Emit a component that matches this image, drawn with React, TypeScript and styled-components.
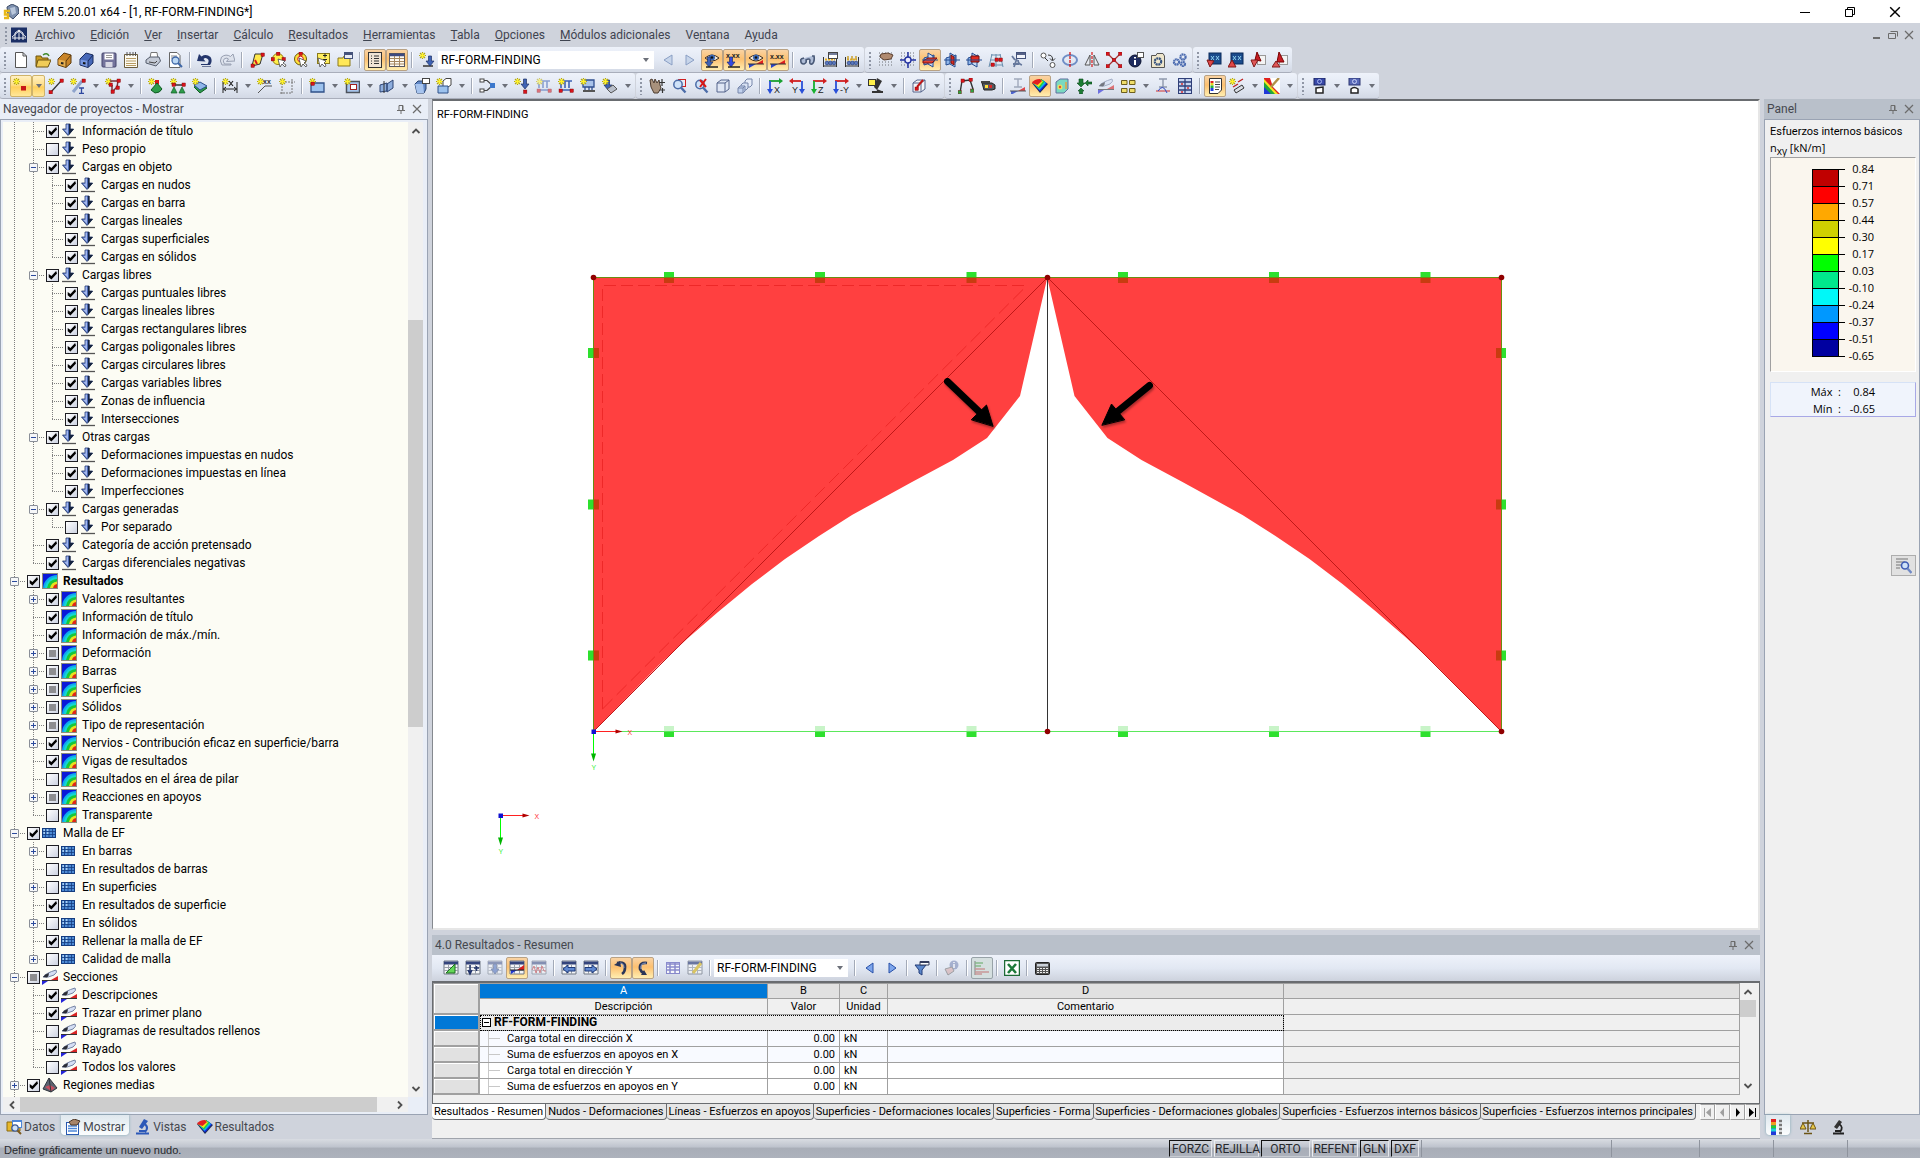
import React from 'react';
import styled, { createGlobalStyle, css } from 'styled-components';

const UI = 'Roboto, "Open Sans", sans-serif';
const SANS = '"Liberation Sans", Arial, sans-serif';

const GlobalStyle = createGlobalStyle`
  *, *::before, *::after { box-sizing: border-box; }
  body { margin: 0; background: #cfd3dc; }
  button, input, select { font: inherit; color: inherit; margin: 0; padding: 0; }
  button { background: none; border: 0; white-space: nowrap; }
  ul { list-style: none; margin: 0; padding: 0; }
  svg { display: block; flex: none; }
`;

/* ---------- icons ---------- */

const Star = ({ x = 0, y = 0 }: { x?: number; y?: number }) => (
  <g transform={`translate(${x} ${y})`}>
    <path d="M3.5 0V7M0 3.5H7M1 1L6 6M6 1L1 6" stroke="#b0a516" strokeWidth="1.2" />
    <path d="M3.5 1V6M1 3.5H6" stroke="#fff22e" strokeWidth="1.6" />
  </g>
);
const Node = ({ x, y, c = '#d8141c' }: { x: number; y: number; c?: string }) => (
  <rect x={x} y={y} width="3.4" height="3.4" fill={c} stroke="#700" strokeWidth=".4" />
);
const Grid = () => (
  <g>
    <path d="M1 1H15V14H1Z" fill="#f4f5f7" stroke="#6f7682" />
    <path d="M1 3H15" stroke="#34447c" strokeWidth="3" />
    <path d="M1 7.5H15M1 10.5H15M5.5 4V14M10.5 4V14" stroke="#9aa0aa" />
  </g>
);
const DotGrid = () => (
  <path d="M1 4H15M1 7H15M1 10H15M1 13H15M1 1H15" stroke="#6d7076" strokeDasharray="1 2" />
);
const Book = () => (
  <g>
    <path d="M1.500 5V15M14.500 5V15M2 14H14" stroke="#333" />
    <path d="M3 7.500H13" stroke="#e8b020" strokeWidth="2" strokeDasharray="2 1" />
    <circle cx="5" cy="11" r="1.900" fill="#5878c0" stroke="#24386c" strokeWidth=".6" />
    <circle cx="8.500" cy="11" r="1.900" fill="#5878c0" stroke="#24386c" strokeWidth=".6" />
    <circle cx="12" cy="11" r="1.900" fill="#5878c0" stroke="#24386c" strokeWidth=".6" />
  </g>
);
const Cube = ({ fill = '#dfe6f4' }: { fill?: string }) => (
  <path d="M2 5L6 2H14V11L10 14H2ZM2 5H10V14M10 5L14 2" fill={fill} stroke="#55658c" />
);
const Loupe = () => (
  <g>
    <circle cx="7" cy="6.5" r="4.2" fill="#cfe2f8" stroke="#4b6ca8" strokeWidth="1.5" />
    <path d="M10 9.5L14.5 14.5" stroke="#4b6ca8" strokeWidth="2.4" />
  </g>
);
const Screen = () => (
  <g>
    <rect x="3" y="1" width="12" height="11" fill="#1a4b8c" stroke="#0b2a5a" />
    <path d="M5 4L8 8M8 4L5 8M10 4L13 8M13 4L10 8" stroke="#8fd0f0" />
  </g>
);
const AxisPair = ({ a, b, t, up }: { a: string; b: string; t: string; up?: boolean }) => (
  <g>
    <path d="M2 3H12" stroke={a} strokeWidth="1.800" />
    <path d={up ? 'M4 0L0 3L4 6Z' : 'M12 0L16 3L12 6Z'} fill={a} />
    <path d={up ? 'M13 3V12' : 'M3 3V12'} stroke={b} strokeWidth="1.800" />
    <path d={up ? 'M10 11L13 16L16 11Z' : 'M0 11L3 16L6 11Z'} fill={b} />
    <text x={up ? 3 : 7} y="15" fontSize="9" fontFamily={SANS} fill="#222">{t}</text>
  </g>
);
const Eye = () => (
  <g>
    <path d="M1 6Q8 0 15 6Q8 12 1 6Z" fill="#f2e4d2" stroke="#3c2b1c" />
    <circle cx="8" cy="5.5" r="3" fill="#3d68b4" /><circle cx="8" cy="5.5" r="1.2" fill="#111" />
  </g>
);
const Wedge = ({ y = 11 }: { y?: number }) => (
  <g>
    <path d={`M1 ${y}H8L1 ${y + 4}Z`} fill="#2a45c8" /><path d={`M15 ${y}H8L15 ${y - 4}Z`} fill="#e02020" />
    <path d={`M0 ${y}H16`} stroke="#333" />
  </g>
);
const DownArrow = ({ x = 8, y = 2, c = '#3e62b4' }: { x?: number; y?: number; c?: string }) => (
  <path d={`M${x - 1.5} ${y}H${x + 1.5}V${y + 5}H${x + 4}L${x} ${y + 10}L${x - 4} ${y + 5}H${x - 1.5}Z`} fill={c} stroke="#1d3166" strokeWidth=".7" />
);
const Pyramid = ({ y = 8, x = 0 }: { y?: number; x?: number }) => (
  <path d={`M${x + 4} ${y}L${x + 7} ${y + 6}H${x + 1}Z`} fill="#2e9d4a" stroke="#0e5a22" strokeWidth=".7" />
);
const IBeam = ({ c = '#8f99ad' }: { c?: string }) => <path d="M4 1H12M8 1V9M4 9H12" stroke={c} strokeWidth="1.4" fill="none" />;
const Crossed = ({ mark }: { mark: string }) => (
  <g>
    <path d="M2 6L12 3V10L2 13Z" fill="#8fb6ea" stroke="#234a90" />
    <path d="M6 1L11 4V15L6 12Z" fill="#c3daf5" stroke="#234a90" />
    {mark === 'xy' && <path d="M1 9L6 6H15L10 11H1Z" fill="#e04030" stroke="#801010" />}
    {mark === 'yz' && <path d="M7 3L10 5V13L7 11Z" fill="#e02a20" stroke="#701010" />}
    {mark === 'xz' && <path d="M5 4H13V10H5Z" fill="#e02a20" stroke="#701010" />}
    <path d="M0 8H16" stroke="#234a90" />
  </g>
);
const Contour = () => (
  <g>
    <rect x=".5" y=".5" width="15" height="15" fill="#0a18d8" stroke="#8c8c7c" />
    <path d="M1 15A14 14 0 0 1 15 2V15Z" fill="#10a8ee" />
    <path d="M3 15A12 12 0 0 1 15 4V15Z" fill="#14d8d0" />
    <path d="M5 15A10 10 0 0 1 15 6V15Z" fill="#18c83a" />
    <path d="M8 15A8 8 0 0 1 15 8.500V15Z" fill="#e8e020" />
    <path d="M11 15A5 5 0 0 1 15 11V15Z" fill="#e02818" />
  </g>
);
const Rainbow = () => (
  <g>
    <path d="M0 5L8 15L16 6L9 1Z" fill="#1c2c50" />
    <path d="M1 5L8 13.500L15 5.500L12 3Z" fill="#1428e8" />
    <path d="M1 5L7.500 12L14 5L11 2Z" fill="#10b8e8" />
    <path d="M1 5L7 10.500L12.500 4L9 1Z" fill="#28d038" />
    <path d="M1 5L6.500 9L11 3.500L8 1Z" fill="#f4e420" />
    <path d="M0 5Q2 1 8 1L10 3L5.500 7Z" fill="#e42020" />
  </g>
);
const Section = () => (
  <g>
    <path d="M1 8Q4 4 14 1Q16 3 12 6Q6 9 1 8Z" fill="#d5dff4" stroke="#7684a4" />
    <path d="M1 8Q3 5 7 4Q7 7 5 8.500Z" fill="#2a2c34" />
    <path d="M0 11.500H16" stroke="#333" /><path d="M0 12H6L0 16Z" fill="#2424d8" /><path d="M16 11H9L16 7Z" fill="#d82424" />
  </g>
);
const Scope = () => (
  <g>
    <path d="M9 1L12 3L7 10L4 8Z" fill="#333" /><path d="M9 5Q14 8 10 13M3 14.500H14M5 12H11" stroke="#222" strokeWidth="1.8" fill="none" />
  </g>
);

const ICONS: Record<string, React.ReactNode> = {
  app: <g><path d="M4 3L9 0L15 3L16 9L10 15L5 11Z" fill="#7c8fae" stroke="#3d4c68" /><path d="M7 4L12 3L13 9L9 11Z" fill="#b9c7dc" /><path d="M7 7H2V10.500H5V14H1" stroke="#e8b818" strokeWidth="2.400" fill="none" /></g>,
  model: <g><rect width="16" height="15" y=".5" fill="#1b2f66" /><path d="M1 11H15M4 13V6L8 3L12 6V13M1 10L8 4L15 10M8 3V13" stroke="#fff" fill="none" strokeWidth=".9" /></g>,
  new: <path d="M2.500.5H10L13.500 4V15.500H2.500ZM10 .5V4H13.500" fill="#fff" stroke="#555" />,
  open: <g><path d="M1 4H6L7 6H13V14H1Z" fill="#c89a20" stroke="#6e5512" /><path d="M3 8H16L13 15H1Z" fill="#f0cc58" stroke="#6e5512" /><path d="M8 3Q12 0 14 4" stroke="#3f8a2c" strokeWidth="1.500" fill="none" /></g>,
  box: <g><path d="M1 7L7 1L14 3V11L9 15.500L1 13Z" fill="#c88428" stroke="#5c3a0c" /><path d="M1.500 7.500L9 9V15L1.500 12.500Z" fill="#e8b050" /><path d="M9 9L14 3M9 9V15" stroke="#5c3a0c" /><path d="M4 11L6.500 11.500" stroke="#222" strokeWidth="1.800" /></g>,
  boxb: <g><path d="M1 7L7 1L14 3V11L9 15.500L1 13Z" fill="#4668b8" stroke="#182a5c" /><path d="M1.500 7.500L9 9V15L1.500 12.500Z" fill="#7898e0" /><path d="M9 9L14 3M9 9V15" stroke="#182a5c" /><path d="M4 11L6.500 11.500" stroke="#111" strokeWidth="1.800" /></g>,
  save: <g><rect x="1" y="1" width="14" height="14" rx="1" fill="#74749c" stroke="#45456c" /><rect x="3.500" y="1.500" width="9" height="6" fill="#fff" /><rect x="4.500" y="10" width="7" height="5" fill="#d8d8e4" /><path d="M5 3.500H11M5 5.500H11" stroke="#999" /></g>,
  report: <g><path d="M1.500 2.500H14.500V15.500H1.500Z" fill="#fdfbf2" stroke="#6b5c3c" /><path d="M4 0V4M7 0V4M10 0V4M12.500 0V4" stroke="#555" /><path d="M3 6.500H13M3 9H13M3 11.500H13M3 13.500H13" stroke="#b79b62" /></g>,
  print: <g><path d="M5 6L6 .5H12L13 7" fill="#fff" stroke="#777" /><path d="M1 8L5 5H14L15.500 9L11 14L1 11Z" fill="#c4cad6" stroke="#555d6c" /><path d="M4 10L10 11L12 9" stroke="#444" fill="none" /></g>,
  preview: <g><path d="M2.500.5H10L13 3.500V15.500H2.500Z" fill="#fff" stroke="#666" /><path d="M4 4H10M4 6H8" stroke="#888" /><circle cx="8.500" cy="8.500" r="3.500" fill="#bcd8f4" stroke="#3f68a8" strokeWidth="1.300" /><path d="M11 11L15 15" stroke="#3f68a8" strokeWidth="2" /></g>,
  undo: <g><path d="M0 9L2 2L4.500 4.500Q9 1.500 13.500 5Q16 9 13 13H4V12H10.500Q13 8 10 6.500Q8 5.500 6.500 7L8.500 9.500Z" fill="#24366c" /><path d="M5 14.500H14" stroke="#6a7698" /></g>,
  redo: <path d="M16 9L14 2L11.500 4.500Q7 1.500 2.500 5Q0 9 3 13H12V12H5.500Q3 8 6 6.500Q8 5.500 9.500 7L7.500 9.500Z" fill="#dde2ec" stroke="#98a0b2" />,
  selpoly: <g><path d="M3 14L6 2H14L11 12Z" fill="#ffe94a" stroke="#333" /><path d="M6 8L8 12" stroke="#d81818" strokeWidth="2" /><Node x={2} y={12} /><Node x={12} y={1} /></g>,
  selcirc: <g><circle cx="7" cy="7" r="5.500" fill="#fff04a" stroke="#967d12" /><Node x={5.500} y={0} /><Node x={0} y={5.500} /><Node x={11} y={5.500} /><path d="M7 7L9 15L11 12L14 15L15 13L12 11L14 9Z" fill="#fff" stroke="#444" strokeWidth=".8" /></g>,
  selring: <g><circle cx="7.500" cy="7" r="6" fill="#ffe23a" stroke="#6c5a08" /><circle cx="7.500" cy="7" r="2.800" fill="#fff" stroke="#d81818" /><Node x={6} y={0} /><path d="M6 6L8 15L10 12L13 15L14 13L11 11L13 9Z" fill="#fff" stroke="#444" strokeWidth=".8" /></g>,
  selwin: <g><rect x="2.500" y="1.500" width="12" height="10" fill="#ffee60" stroke="#8a7a1c" /><path d="M8 3.500H12M10 1.500V5.500M8 7.500H12" stroke="#222" /><path d="M3 6L5 15L7 12L10 15L11 13L9 11L11 9Z" fill="#fff" stroke="#444" strokeWidth=".8" /></g>,
  selfold: <g><path d="M1 6H6L7 4H13V14H1Z" fill="#ffe858" stroke="#8c7a18" /><rect x="7.500" y=".5" width="8" height="6" fill="#e8ecf6" stroke="#44527a" /><path d="M8 2H15" stroke="#44527a" strokeWidth="2" /></g>,
  list: <g><rect x="1.500" y=".5" width="13" height="15" fill="#f0e4d4" stroke="#333" /><path d="M4 4H5M4 6.500H5M4 9H5M4 11.500H5M7 4H12M7 6.500H12M7 9H12M7 11.500H12" stroke="#333" strokeWidth="1.200" /></g>,
  table: <g><rect x=".5" y="1.500" width="15" height="13" fill="#fffaf0" stroke="#565660" /><path d="M1 3H15" stroke="#3e4a80" strokeWidth="2.500" /><path d="M1 6.500H15M1 9.500H15M1 12H15M5.500 4V14M10.500 4V14" stroke="#a48660" /></g>,
  newload: <g><Star /><path d="M4 14H14" stroke="#333" strokeWidth="1.500" /><DownArrow x={11} y={4} /></g>,
  prev: <path d="M12 3V13L4 8Z" fill="#c7d5ea" stroke="#8a9fc4" />,
  next: <path d="M4 3V13L12 8Z" fill="#c7d5ea" stroke="#8a9fc4" />,
  eyeload: <g><Eye /><DownArrow x={5} y={5} /><path d="M2 15H14" stroke="#222" strokeWidth="1.500" /></g>,
  valload: <g><text x="0" y="6" fontSize="7" fontWeight="700" fontFamily={SANS} fill="#222">x.xx</text><DownArrow x={5} y={5} c="#3448e0" /><path d="M2 15H14" stroke="#222" strokeWidth="1.500" /></g>,
  eyeres: <g><Eye /><Wedge y={12} /></g>,
  valres: <g><text x="0" y="7" fontSize="7" fontWeight="700" fontFamily={SANS} fill="#222">x.xx</text><Wedge y={12} /></g>,
  glasses: <path d="M1 7Q0 12 4 12Q7 11 6 8Q9 6 10 8Q9 13 12 12Q15 10 14 4L12 4M1 7L4 6" stroke="#4a5a78" strokeWidth="1.600" fill="#aebcd6" />,
  calcbook: <g><Book /><rect x="6.500" y=".5" width="9" height="6" fill="#fff" stroke="#444" /><path d="M7 2H15" stroke="#44527a" strokeWidth="1.500" /></g>,
  calcall: <g><Book /><path d="M4 4V8M8 4V8M12 4V8" stroke="#c8a030" strokeWidth="1.500" /></g>,
  handgrid: <g><DotGrid /><path d="M3 2L10 1L15 3L13 7L6 8L2 5Z" fill="#b08a70" stroke="#5c4030" /></g>,
  snap: <g><DotGrid /><circle cx="8" cy="8" r="3" fill="#eef" stroke="#2030a0" strokeWidth="1.300" /><path d="M8 0V5M8 11V16M0 8H5M11 8H16" stroke="#2030a0" strokeWidth="1.500" /></g>,
  planexy: <Crossed mark="xy" />, planeyz: <Crossed mark="yz" />, planexz: <Crossed mark="xz" />,
  lattice: <g><path d="M4 2L1 15M8 2V15M12 2L15 15M3 3H13M2 8H14M1 13H15" stroke="#6a8fae" fill="none" /><Node x={7} y={6} /><Node x={3} y={11} /><Node x={11} y={6} /></g>,
  tools: <g><path d="M4 15L7 6M3 12H9M12 13Q8 12 8 8M2 4L5 8" stroke="#66789c" strokeWidth="1.800" /><rect x="6.500" y=".5" width="9" height="6" fill="#f2f4fa" stroke="#44527a" /><path d="M7 2H15" stroke="#44527a" strokeWidth="1.800" /></g>,
  copy: <g><circle cx="3.500" cy="3.500" r="2.500" fill="#fff" stroke="#555" /><circle cx="12.500" cy="13" r="2.500" fill="#fff" stroke="#555" /><path d="M8 3Q13 3 12.500 8M10 6.500L12.500 9L15 6.500M5 6L8 9" stroke="#333" fill="none" /></g>,
  rotate: <g><ellipse cx="8" cy="8" rx="7" ry="5" fill="none" stroke="#6f8ec6" strokeWidth="2" /><path d="M8 0V16" stroke="#d81818" strokeWidth="1.300" strokeDasharray="3 1" /></g>,
  mirror: <g><path d="M6 3V13H1ZM10 3V13H15Z" fill="#e8ebf2" stroke="#555" /><path d="M8 0V16" stroke="#d81818" strokeWidth="1.200" strokeDasharray="3 1" /></g>,
  explode: <g><path d="M2 2L14 14M14 2L2 14" stroke="#a33" strokeWidth="1.300" /><Node x={0} y={0} /><Node x={12.500} y={0} /><Node x={0} y={12.500} /><Node x={12.500} y={12.500} /><Node x={6.300} y={6.300} /></g>,
  info: <g><circle cx="7" cy="9" r="6" fill="#1c2a5e" stroke="#0b1230" /><path d="M7 8V13M7 5V6.500" stroke="#fff" strokeWidth="2" /><rect x="9.500" y=".5" width="6" height="5" fill="#fff" stroke="#555" /></g>,
  gearwin: <g><path d="M1.500 3.500H6L7 1.500H13L14.500 4V15.500H1.500Z" fill="#eee6cc" stroke="#555" /><circle cx="8" cy="9.500" r="3.200" fill="none" stroke="#33507e" strokeWidth="2.200" strokeDasharray="2 .6" /></g>,
  gears: <g fill="none" stroke="#4c6cb0" strokeWidth="2.200" strokeDasharray="1.700 .4"><circle cx="4.500" cy="10" r="2.600" /><circle cx="11" cy="5" r="2.600" /><circle cx="11" cy="12" r="2" /></g>,
  scrdown: <g><Screen /><path d="M1 8L8 9L4 15Z" fill="#e04848" stroke="#801818" /></g>,
  scrup: <g><Screen /><path d="M4 8L8 15H0Z" fill="#e04848" stroke="#801818" /></g>,
  acdown: <g><rect x="7.500" y="3.500" width="8" height="9" fill="#f4f4f4" stroke="#999" /><path d="M7 0L11 9L5 8Z" fill="#c81c24" stroke="#700" /><path d="M1 8H8L4 15Z" fill="#e05858" stroke="#801818" /></g>,
  acup: <g><rect x="7.500" y="3.500" width="8" height="9" fill="#f4f4f4" stroke="#999" /><path d="M7 0L12 10H5Z" fill="#c81c24" stroke="#700" /><path d="M4 9L8 15H0Z" fill="#e05858" stroke="#801818" /></g>,

  nnode: <g><Star /><rect x="8" y="8" width="5" height="4.500" fill="#c81818" /></g>,
  nline: <g><path d="M3 14L13 3" stroke="#333" strokeWidth="1.200" /><Node x={12} y={1} /><Node x={1} y={12.500} /><Star /></g>,
  nbeam: <g><path d="M3 14L12 3" stroke="#8fa4cc" strokeWidth="3" /><Node x={12} y={1} /><Star /><path d="M9 10H14M11.500 10V15M9 15.500H14" stroke="#2f49a0" strokeWidth="1.300" /></g>,
  npoly: <g><Star /><path d="M5 3H13L12 9L7 14V7" stroke="#7c3038" strokeWidth="1.500" fill="none" /><Node x={4} y={5} /><Node x={12} y={1} /><Node x={11} y={8} /><Node x={6} y={12} /></g>,
  nsup: <g><Star /><rect x="7" y="2" width="4" height="4" fill="#d81818" /><path d="M9 5L14 11Q12 15 7 15L3 12Z" fill="#2e9d4a" stroke="#0e5a22" /></g>,
  nlsup: <g><Star /><path d="M3 7H14" stroke="#333" strokeWidth="1.500" /><Node x={2} y={5} /><Node x={12} y={5} /><Pyramid x={0} y={9} /><Pyramid x={8} y={9} /></g>,
  nssup: <g><path d="M2 9L8 6L15 10L8 15Z" fill="#2e9d4a" stroke="#0e5a22" /><path d="M2 7L8 4L15 8L8 12Z" fill="#8fb6ea" stroke="#2b4f8c" /><Star /></g>,
  ndim: <g><Star /><path d="M1 4V15M15 4V15M1 11H15M4 9L1.500 11L4 13M12 9L14.500 11L12 13" stroke="#222" fill="none" /><path d="M7 3L11 8M11 3L7 8" stroke="#222" strokeWidth="1.200" /></g>,
  nxx: <g><Star /><path d="M1 15L8 8H15" stroke="#555" fill="none" /><text x="6" y="6" fontSize="7" fontWeight="700" fontFamily={SANS} fill="#333">xx</text></g>,
  nguide: <g><path d="M3 16V4H16M13 1V15H1" stroke="#777" strokeDasharray="2 1" fill="none" /><Star /></g>,
  nsurf: <g><path d="M2 5H15V14H2Z" fill="#9cc2ee" stroke="#2f5088" strokeWidth="1.300" /><Star /><Node x={2} y={4} /></g>,
  nopen: <g><rect x="2.500" y="3.500" width="13" height="11" fill="#a8c6ec" stroke="#4e535c" strokeWidth="1.500" /><rect x="6.500" y="6.500" width="6" height="5" fill="#fff" stroke="#a02020" /><Star /></g>,
  ncut: <g><path d="M1 7L8 5V13L1 14ZM8 6L14 2V10L8 14Z" fill="#8eaede" stroke="#2d4474" /><path d="M5 3V15" stroke="#333" /></g>,
  nsolid: <g><path d="M1 6L4 3H12V11L10 15H3Z" fill="#6188c8" stroke="#24406e" /><path d="M1 6H9L10 15H3Z" fill="#a7c4ee" /><rect x="8.500" y=".5" width="7" height="5" fill="#fff" stroke="#444" /></g>,
  nsolids: <g><path d="M7 3L10 .5H15V7L12 9H7Z" fill="#fff" stroke="#444" /><path d="M2 8H12V15H2Z" fill="#9cc2ee" stroke="#2f5088" /><Star /></g>,
  hinge: <g><path d="M2 2.500H8L13 7M2 12.500H8L13 8" stroke="#444" fill="none" strokeWidth="1.200" /><rect x="1" y="1" width="4" height="3" fill="#fff" stroke="#444" /><rect x="1" y="11" width="4" height="3" fill="#fff" stroke="#444" /><rect x="11" y="5" width="5" height="5" fill="#3c78cc" /></g>,
  nnload: <g><Star /><DownArrow x={11} y={1} /><Node x={9.500} y={12} /></g>,
  mload1: <g opacity=".55"><path d="M2 3H14M3 3V10M7 3V10M11 3V10M1 12H15" stroke="#3e62b4" strokeWidth="1.600" /><Star /><Node x={1} y={11} /><Node x={12} y={11} /></g>,
  mload2: <g><path d="M2 3H14M3 3V10M7 3V10M11 3V10M1 12H15" stroke="#3e62b4" strokeWidth="1.600" /><Star /><Node x={1} y={11} /><Node x={12} y={11} /></g>,
  sload: <g><path d="M3 2H14V9H3ZM5 9V14M9 9V14M12 9V14" fill="#a9c3ea" stroke="#2f4f90" strokeWidth="1.300" /><path d="M3 13H15" stroke="#555" strokeWidth="2" /><Star /></g>,
  fload: <g><DownArrow x={6} y={2} /><path d="M5 11L11 7L15 11L9 15Z" fill="#b9bfca" stroke="#555" /><Star /></g>,

  hand: <g><path d="M1 2L3 1L5 5L6 1L8 5L10 2L11 7L12 10L9 15H5L2 9Z" fill="#a8917c" stroke="#4c3c30" /><path d="M13 1V8M10 4.500H16M11 12H16M13.500 10V15" stroke="#333" strokeWidth="1.200" /></g>,
  zoomwin: <g><rect x="7.500" y="1.500" width="7" height="7" fill="none" stroke="#d02020" /><Loupe /></g>,
  zoomx: <g><Loupe /><path d="M7 2L13 9M13 1L7 9" stroke="#d81818" strokeWidth="2" /></g>,
  cube: <Cube />,
  cubes: <g><path d="M8 3L10 1H15V7L13 9H8Z" fill="#e6ecf8" stroke="#7686aa" /><path d="M4 7L6 5H11V10L9 12H4Z" fill="#d8e2f4" stroke="#7686aa" /><path d="M1 10L3 8H8V13L6 15H1ZM1 10H6V15M6 10L8 8" fill="#c2d2ee" stroke="#7686aa" /></g>,
  axx: <AxisPair a="#18a030" b="#2a50d8" t="X" />, axy: <AxisPair a="#d02020" b="#2a50d8" t="Y" up />,
  axz: <AxisPair a="#d02020" b="#18b030" t="Z" />, axmy: <AxisPair a="#d02020" b="#2a50d8" t="-Y" />,
  viewpt: <g><path d="M9 0L14 3L9 12L6 9Z" fill="#333" /><path d="M4 14H15M9 12L14 14" stroke="#333" strokeWidth="1.800" /><rect x=".5" y="1.500" width="7" height="6" fill="#fff04a" stroke="#333" /></g>,
  clip: <g><Cube fill="#f4f5f8" /><path d="M12 2L6 9" stroke="#c01818" strokeWidth="2" /><Node x={4} y={9} /></g>,
  frame: <g><path d="M2 15L4 3L12 2L15 11" stroke="#333" fill="none" strokeWidth="1.400" /><Node x={3} y={1} /><Node x={11} y={0} /><Node x={0} y={12.500} c="#30a040" /><Node x={12.500} y={11} c="#30a040" /></g>,
  camera: <g><path d="M2 5H12L15 7V11L12 12H4Z" fill="#555a60" stroke="#222" /><path d="M1 4H10" stroke="#444" strokeWidth="2" /><rect x="5" y="7" width="3" height="3" fill="#ffe03a" /><rect x="9" y="7" width="3" height="3" fill="#d82828" /></g>,
  ires: <g opacity=".8"><IBeam /><Wedge y={13} /></g>,
  rainbow: <Rainbow />,
  solres: <g><path d="M2 4L6 1H14V11L10 15H2Z" fill="#7ad8c0" stroke="#6070a0" /><circle cx="6" cy="9" r="2.500" fill="#f0e060" /><circle cx="6" cy="9" r="1.200" fill="#e05030" /><path d="M12 4V11" stroke="#e8a040" strokeWidth="1.500" /></g>,
  react: <g fill="#1c7c34" stroke="#0c4a1c" strokeWidth=".6"><path d="M3 1H7V5H9L5 9L1 5H3Z" /><path d="M9 5L12 2V4H16V6H12V8Z" /><path d="M5 10L8 13H6.500V16H3.500V13H2Z" /></g>,
  secres: <g opacity=".6"><Section /></g>,
  blocks: <path d="M1.500 2.500H7V6.500H1.500ZM9.500 2.500H15V6.500H9.500ZM1.500 10.500H7V14.500H1.500ZM9.500 10.500H15V14.500H9.500Z" fill="#efdd6a" stroke="#6c5e1c" />,
  isec: <g><IBeam /><path d="M1 13H15" stroke="#d03030" /><path d="M3 13Q8 5 12 15" stroke="#3048c0" fill="none" /></g>,
  resgrid: <g><rect x="1.500" y=".5" width="13" height="15" fill="#c8d4f0" stroke="#2f3f78" /><path d="M2 4H14M2 8H14M2 12H14M8 1V15" stroke="#2f3f78" strokeWidth="1.300" /><path d="M4 6H6M10 10H12M4 14H6" stroke="#d83030" strokeWidth="1.300" /></g>,
  legend: <g><path d="M2.500.5H14.500V12L11 15.500H2.500Z" fill="#fff" stroke="#333" /><path d="M5 3V5" stroke="#e02020" strokeWidth="3" /><path d="M5 5V7.500" stroke="#e8d020" strokeWidth="3" /><path d="M5 7.500V10" stroke="#20b040" strokeWidth="3" /><path d="M5 10V13" stroke="#2040e0" strokeWidth="3" /><path d="M8 4H13M8 6.500H13M8 9H13M8 11.500H12" stroke="#444" /></g>,
  wand: <g><Star /><path d="M5 12L13 7L15 10L7 15Z" fill="#d8dce4" stroke="#333" /><path d="M9 4L14 1M4 9L9 6" stroke="#c02020" strokeWidth="1.400" /></g>,
  palette: <g><rect width="16" height="16" fill="#20a838" /><path d="M0 4L11 16H16V0H0Z" fill="#f4e420" /><path d="M0 0H16V16H14L0 1Z" fill="#e02020" /><path d="M0 9V16H7Z" fill="#2038d8" /><path d="M6 0H16V16L9 9Z" fill="#fff" /><path d="M7 9L15 0" stroke="#b09048" strokeWidth="2.400" /></g>,
  disp1: <g><rect x="3" y="0" width="11" height="7" fill="#3848a8" stroke="#1c2660" /><circle cx="8.500" cy="3.500" r="2" fill="none" stroke="#a8b4f0" /><path d="M5 10L12 9V15H5Z" fill="#fff" stroke="#222" strokeWidth="1.500" /></g>,
  disp2: <g><rect x="3" y="0" width="11" height="7" fill="#5868b8" stroke="#2c3670" /><circle cx="8.500" cy="3.500" r="2" fill="none" stroke="#c8d0f4" /><path d="M5 11Q8 8 12 11V15H5Z" fill="#fff" stroke="#222" strokeWidth="1.500" /></g>,

  t1: <g><Grid /><path d="M3 13L12 4V13Z" fill="#64d858" stroke="#1c6c20" /></g>,
  t2: <g><Grid /><path d="M5 5V13M3 10L5 14L7 10M9 8H14M11.500 6V11" stroke="#22346c" strokeWidth="1.500" /></g>,
  t3: <g opacity=".5"><Grid /><DownArrow x={8} y={4} /></g>,
  t4: <g><Grid /><path d="M8 10L15 5V10Z" fill="#d82020" /><path d="M2 10H8L2 14Z" fill="#2038d0" /><path d="M1 10H15" stroke="#222" /></g>,
  t5: <g opacity=".55"><Grid /><path d="M1 10L3 6L5 13L7 7L9 13L11 6L13 11H15" stroke="#c83838" fill="none" /></g>,
  tl: <g><Grid /><path d="M2 9L7 5V7.500H14V11H7V13Z" fill="#6088d0" stroke="#1c3878" /></g>,
  tr: <g><Grid /><path d="M14 9L9 5V7.500H2V11H9V13Z" fill="#6088d0" stroke="#1c3878" /></g>,
  sync1: <g><path d="M4 3Q13 1 12 8Q12 12 9 14" stroke="#2a3658" strokeWidth="2.600" fill="none" /><path d="M5 3Q11 2 11 8" stroke="#8fa0c8" fill="none" /><path d="M1 5L7 1L8 7Z" fill="#2a3658" /></g>,
  sync2: <g><path d="M12 3Q4 2 5 9Q6 12 9 13" stroke="#2a3658" strokeWidth="2.600" fill="none" /><path d="M11 3Q5 3 6 9" stroke="#8fa0c8" fill="none" /><path d="M12 15L6 15L9 10Z" fill="#2a3658" /></g>,
  tgrid: <g opacity=".75"><rect x="1.500" y="2.500" width="13" height="11" fill="#fff" stroke="#6c6cc0" /><path d="M1 4H15M1 7H15M1 10H15M5 3V14M10 3V14" stroke="#6c6cc0" strokeWidth="1.500" /></g>,
  tedit: <g opacity=".7"><Grid /><path d="M6 13L14 3" stroke="#d8b828" strokeWidth="3" /></g>,
  left: <path d="M11 3V13L4 8Z" fill="#7ea6ec" stroke="#2850a8" />,
  right: <path d="M5 3V13L12 8Z" fill="#7ea6ec" stroke="#2850a8" />,
  filter: <g><path d="M1 5H12L8 10V15L5 13V10Z" fill="#5c88cc" stroke="#223c78" /><path d="M6 1.500H15V5H6Z" fill="#fff" stroke="#333c5c" /><path d="M6 2H15" stroke="#333c5c" strokeWidth="2" /></g>,
  pinfo: <g opacity=".55"><circle cx="10" cy="5" r="4.500" fill="#7080b0" /><path d="M10 4V8M10 2V3" stroke="#fff" strokeWidth="1.500" /><path d="M1 9L8 7L10 11L4 15Z" fill="#d8a8a8" stroke="#666" /></g>,
  bars: <g opacity=".6"><path d="M1 1V15" stroke="#444" /><path d="M1 3H9M1 6H7" stroke="#52a052" strokeWidth="1.500" /><path d="M1 9H11M1 12H15M1 14H8" stroke="#c06868" strokeWidth="1.300" /></g>,
  excel: <g><rect x=".5" y=".5" width="15" height="15" fill="#fff" stroke="#1d6b35" strokeWidth="1.500" /><path d="M4 4L12 13M12 4L4 13" stroke="#1d7a3a" strokeWidth="2.600" /></g>,
  calc: <g><rect x="1.500" y="2.500" width="14" height="12" rx="1" fill="#555" stroke="#222" /><rect x="3" y="4" width="11" height="2.500" fill="#ccd2da" /><path d="M3 8.500H14M3 10.500H14M3 12.500H14" stroke="#eee" strokeDasharray="2 1" /></g>,

  load: <g><path d="M1 14.500H15" stroke="#555" strokeWidth="1.300" /><path d="M5 1H9V6H12.500L7 12.500L1.500 6H5Z" fill="#4a68b4" stroke="#23386e" strokeWidth=".8" /><path d="M5.500 1.500H7V11L3 6.800H5.500Z" fill="#a3b8ee" /><path d="M8 1H9.500V6H13L8 12Z" fill="#15233f" /></g>,
  contour: <Contour />,
  mesh: <g><rect x=".5" y="3.500" width="13" height="9" fill="#4c8ad4" stroke="#143c80" /><path d="M0 6.500H14M0 9.500H14M3.500 3V13M7 3V13M10.500 3V13" stroke="#143c80" strokeWidth=".8" /><path d="M1.500 5H3M5 5H6.500M1.500 8H3M5 8H6.500" stroke="#c4e4fa" strokeWidth="1.500" /></g>,
  section: <Section />,
  pyramid: <g><path d="M7 1L15 11L9 15L1 12Z" fill="#5c6470" stroke="#2f343c" /><path d="M3 10L8 8L13 11L9 14Z" fill="#c85060" /><path d="M7 1L9 15" stroke="#2f343c" /></g>,

  tabData: <g><path d="M1 3H6L7 5H14V12H1Z" fill="#e8b82c" stroke="#8a6a10" /><rect x="6" y="1" width="10" height="8" fill="#4c86d8" /><rect x="7" y="3" width="8" height="5" fill="#fff" /><circle cx="9" cy="9" r="3.200" fill="#cfe2f8" stroke="#3f5c94" strokeWidth="1.300" /><path d="M11.500 11.500L15 15" stroke="#7c5a20" strokeWidth="2" /></g>,
  tabShow: <g><rect x="1.500" y="3.500" width="12" height="12" fill="#fff" stroke="#2858b0" /><path d="M3 7H12M3 9.500H12M3 12H12" stroke="#4c86d8" strokeWidth="1.300" /><path d="M4 3L9 0L15 2L12 6L6 6Z" fill="#a88468" stroke="#4c3626" /></g>,
  tabViews: <g><path d="M9 0L13 2L7 10L4 8Z" fill="#2c58b8" /><path d="M10 5Q14 9 10 13M1 14.500H14M4 12H11" stroke="#2c58b8" strokeWidth="2" fill="none" /></g>,
  colors: <g><path d="M1 0H6V16H1Z" fill="#2038d8" /><rect x="1" y="0" width="5" height="3" fill="#e02020" /><rect x="1" y="3" width="5" height="3.500" fill="#f0a020" /><rect x="1" y="6.500" width="5" height="3" fill="#20d030" /><rect x="1" y="9.500" width="5" height="3" fill="#20d0d8" /><path d="M9 2H12M9 6H12M9 10H12M9 14H12" stroke="#777" strokeWidth="2.400" /></g>,
  scales: <g><path d="M8 1V13M2 4H14M4 14.500H12" stroke="#6c5414" strokeWidth="1.500" /><path d="M3 4L0 10H6ZM13 4L10 10H16Z" fill="#e8c848" stroke="#6c5414" /></g>,
  scope: <Scope />,
  sheetzoom: <g><path d="M0 1H12M0 4H9M0 7H5M0 10H4" stroke="#777" strokeWidth="1.200" /><circle cx="9" cy="7.500" r="3.500" fill="#cfe2f8" stroke="#3f5cb4" strokeWidth="1.600" /><path d="M11.500 10.500L15.500 15" stroke="#6f88c4" strokeWidth="2.400" /></g>,
};

const Icon = ({ name, size = 16 }: { name: string; size?: number }) => (
  <svg width={size} height={size} viewBox="0 0 16 16" fill="none" aria-hidden="true">{ICONS[name]}</svg>
);
const Pin = () => (
  <svg width="10" height="10" viewBox="0 0 10 10" fill="none" stroke="#6c6c6c" aria-hidden="true"><path d="M3 6V1.500H7V6M6.500 1.500V6M1 6.500H9M5 6.500V10" /></svg>
);
const Close = ({ size = 10, color = '#6c6c6c' }: { size?: number; color?: string }) => (
  <svg width={size} height={size} viewBox="0 0 10 10" fill="none" stroke={color} strokeWidth="1.200" aria-hidden="true"><path d="M1 1L9 9M9 1L1 9" /></svg>
);
const Chevron = ({ turn }: { turn: number }) => (
  <svg width="10" height="10" viewBox="0 0 10 10" fill="none" stroke="#505050" strokeWidth="1.800" aria-hidden="true"><path d="M1.500 7L5 3.500L8.500 7" transform={`rotate(${turn} 5 5)`} /></svg>
);

/* ---------- window frame ---------- */

const Window = styled.div`
  display: flex;
  flex-direction: column;
  height: 100vh;
  overflow: hidden;
  background: #cfd3dc;
  color: #000;
  font: 12px/16px ${UI};
`;
const TitleBar = styled.header`
  display: flex;
  align-items: center;
  height: 23px;
  padding: 0 3px;
  gap: 4px;
  background: #fff;
  h1 { flex: 1; margin: 0; font: 12px/16px ${UI}; }
`;
const WindowButtons = styled.div`
  display: flex;
`;
const WindowButton = styled.button`
  display: grid;
  place-items: center;
  width: 45px;
  height: 23px;
`;
const MenuBar = styled.nav`
  display: flex;
  align-items: center;
  height: 24px;
  padding-left: 4px;
  color: #3f4450;
`;
const Grip = styled.i`
  width: 4px;
  height: 18px;
  margin-right: 3px;
  background: radial-gradient(circle, #8f96a5 1px, transparent 1px) 0 0 / 4px 4px;
`;
const MenuButton = styled.button`
  height: 22px;
  padding: 0 7px 0 8px;
`;
const MdiButtons = styled.div`
  display: flex;
  gap: 2px;
  margin-left: auto;
  padding-right: 4px;
`;
const SmallButton = styled.button`
  display: grid;
  place-items: center;
  width: 14px;
  height: 16px;
`;

/* ---------- toolbars ---------- */

const ToolRow = styled.div`
  display: flex;
  gap: 1px;
  height: 26px;
`;
const ToolGroup = styled.div`
  display: flex;
  align-items: center;
  height: 26px;
  padding: 1px 1px 0 3px;
  border-radius: 3px;
  border-bottom: 1px solid #a9aebb;
  background: linear-gradient(#eef2fa, #e2e8f3 55%, #d3d9e5);
`;
type Tone = 'on' | 'hover' | 'dim' | undefined;
const tones = {
  on: css`border-color: #b9a284; background: linear-gradient(#f9d3a4, #fdc070 45%, #ffeeb0);`,
  hover: css`border-color: #cfb36a; background: linear-gradient(#fff0c4, #ffdf8a 45%, #ffd05c 55%, #ffe79a);`,
  dim: css`border-color: #98a3a8; background: #d5dfdf;`,
};
const ToolButton = styled.button<{ $tone: Tone }>`
  display: grid;
  place-items: center;
  width: 22px;
  height: 22px;
  border: 1px solid transparent;
  border-radius: 2px;
  ${p => p.$tone && tones[p.$tone]}
`;
const DropButton = styled(ToolButton)`
  width: 13px;
`;
const Separator = styled.i`
  width: 1px;
  height: 16px;
  margin: 0 4px 0 3px;
  background: #a3aab8;
  box-shadow: 1px 0 #fff;
`;
const Triangle = styled.i`
  border: 3px solid transparent;
  border-top: 4px solid #6c7079;
  border-bottom: 0;
`;
const Combo = styled.label<{ $w: number }>`
  display: flex;
  align-items: center;
  width: ${p => p.$w}px;
  height: 18px;
  margin-right: 3px;
  padding-right: 5px;
  background: #fff;
  select { flex: 1; min-width: 0; padding-left: 3px; border: 0; outline: 0; appearance: none; background: none; }
`;

const Tools = ({ spec }: { spec: string }) => (
  <>
    {spec.split(' ').map((item, i) => {
      if (item === '|') return <Separator key={i} />;
      const name = item.replace(/[*>~^]/g, '');
      const tone: Tone = item.includes('*') ? 'on' : item.includes('^') ? 'hover' : item.includes('~') ? 'dim' : undefined;
      return (
        <React.Fragment key={i}>
          <ToolButton $tone={tone} aria-label={name}><Icon name={name} /></ToolButton>
          {item.includes('>') && <DropButton $tone={tone} aria-label={`${name} menu`}><Triangle /></DropButton>}
        </React.Fragment>
      );
    })}
  </>
);
const CaseSelect = ({ width }: { width: number }) => (
  <Combo $w={width}>
    <select aria-label="RF-FORM-FINDING"><option>RF-FORM-FINDING</option></select>
    <Triangle />
  </Combo>
);

/* ---------- docking area ---------- */

const Workspace = styled.main`
  display: grid;
  grid-template-columns: 428px minmax(0, 1fr) 156px;
  column-gap: 4px;
  flex: 1;
  min-height: 0;
`;
const Column = styled.div`
  display: flex;
  flex-direction: column;
  min-width: 0;
  min-height: 0;
`;
const DockTitle = styled.header<{ $active?: boolean }>`
  display: flex;
  align-items: center;
  gap: 2px;
  height: 20px;
  padding: 0 4px 0 3px;
  background: ${p => (p.$active ? '#e9eef7' : '#b9c0ca')};
  color: #45484f;
  h2 { flex: 1; margin: 0; font: 12px/16px ${UI}; }
`;
const DockTabs = styled.div`
  display: flex;
  height: 24px;
  padding-left: 2px;
  gap: 2px;
  color: #45484f;
`;
const DockTab = styled.button<{ $on?: boolean }>`
  display: flex;
  align-items: center;
  gap: 2px;
  height: 20px;
  padding: 3px 4px 0;
  border-radius: 0 0 4px 4px;
  ${p => p.$on && css`background: linear-gradient(#dfe8ee, #fbfdfe); box-shadow: 0 0 3px #7fa9b5;`}
`;
const IconTabs = styled(DockTabs)`
  gap: 6px;
`;

/* ---------- navigator tree ---------- */

const TreeFrame = styled.div`
  display: grid;
  grid-template: minmax(0, 1fr) 15px / minmax(0, 1fr) 15px;
  flex: 1;
  min-height: 0;
  padding: 2px 4px 2px 2px;
  border: 1px solid #9aa3b3;
  background: #e9eef7;
`;
const TreeView = styled.div`
  overflow: hidden;
  background: #fcfcf4;
`;
const Row = styled.div`
  display: flex;
  align-items: center;
  height: 18px;
  padding-left: 2px;
  label { display: flex; align-items: center; height: 18px; white-space: nowrap; }
  svg { margin: 0 5px 0 2px; }
`;
const dotsV = 'repeating-linear-gradient(#808080 0 1px, transparent 1px 2px)';
const dotsH = 'repeating-linear-gradient(90deg, #808080 0 1px, transparent 1px 2px)';
const Guide = styled.span<{ $kind: 'pass' | 'tee' | 'end' | 'none' }>`
  display: grid;
  place-items: center start;
  width: ${p => (p.$kind === 'tee' || p.$kind === 'end' ? 22 : 19)}px;
  height: 18px;
  padding-left: 5px;
  background-repeat: no-repeat;
  ${p => p.$kind === 'pass' && css`background-image: ${dotsV}; background-size: 1px 100%; background-position: 9px 0;`}
  ${p => p.$kind === 'tee' && css`background-image: ${dotsV}, ${dotsH}; background-size: 1px 100%, 12px 1px; background-position: 9px 0, 9px 9px;`}
  ${p => p.$kind === 'end' && css`background-image: ${dotsV}, ${dotsH}; background-size: 1px 10px, 12px 1px; background-position: 9px 0, 9px 9px;`}
`;
const Expander = styled.button<{ $open: boolean }>`
  width: 9px;
  height: 9px;
  border: 1px solid #8a8f98;
  border-radius: 1px;
  background:
    linear-gradient(#2b4a9c, #2b4a9c) 50% 50% / 5px 1px no-repeat,
    linear-gradient(#2b4a9c, #2b4a9c) 50% 50% / 1px ${p => (p.$open ? 1 : 5)}px no-repeat,
    #f6f7f8;
`;
const Check = styled.input<{ $mixed?: boolean }>`
  appearance: none;
  display: grid;
  place-items: center;
  width: 13px;
  height: 13px;
  border: 1px solid #1e1e24;
  background: linear-gradient(135deg, #fff, #cdd3e2);
  &::before {
    content: '';
    width: 9px;
    height: 9px;
    ${p => p.$mixed && css`width: 7px; height: 7px; background: #8d8d90;`}
  }
  &:checked::before { background: #000; clip-path: polygon(8% 38%, 38% 62%, 90% 5%, 100% 32%, 38% 100%, 8% 75%); }
`;

type TreeItem = { t: string; i: string; c: 0 | 1 | 2; open?: boolean; bold?: boolean; hidden?: boolean; kids?: TreeItem[] };
/* Each row is written as check state (0 off, 1 on, 2 mixed), "+" when it can be expanded, then its caption. */
const leaf = (i: string, rows: string): TreeItem[] =>
  rows.split('|').map(r => ({ t: r.slice(2), i, c: Number(r[0]) as 0 | 1 | 2, ...(r[1] === '+' ? { open: false } : {}) }));
const branch = (i: string, t: string, rows: string): TreeItem => ({ t, i, c: 1, open: true, kids: leaf(i, rows) });

const TREE: TreeItem[] = [
  {
    t: 'Cargas', i: 'load', c: 1, hidden: true, kids: [
      ...leaf('load', '1 Información de título|0 Peso propio'),
      branch('load', 'Cargas en objeto', '1 Cargas en nudos|1 Cargas en barra|1 Cargas lineales|1 Cargas superficiales|1 Cargas en sólidos'),
      branch('load', 'Cargas libres', '1 Cargas puntuales libres|1 Cargas lineales libres|1 Cargas rectangulares libres|1 Cargas poligonales libres|1 Cargas circulares libres|1 Cargas variables libres|1 Zonas de influencia|1 Intersecciones'),
      branch('load', 'Otras cargas', '1 Deformaciones impuestas en nudos|1 Deformaciones impuestas en línea|1 Imperfecciones'),
      branch('load', 'Cargas generadas', '0 Por separado'),
      ...leaf('load', '1 Categoría de acción pretensado|1 Cargas diferenciales negativas'),
    ],
  },
  {
    t: 'Resultados', i: 'contour', c: 1, open: true, bold: true,
    kids: leaf('contour', '1+Valores resultantes|1 Información de título|1 Información de máx./mín.|2+Deformación|2+Barras|2+Superficies|2+Sólidos|2+Tipo de representación|1+Nervios - Contribución eficaz en superficie/barra|1 Vigas de resultados|0 Resultados en el área de pilar|2+Reacciones en apoyos|0 Transparente'),
  },
  {
    t: 'Malla de EF', i: 'mesh', c: 1, open: true,
    kids: leaf('mesh', '0+En barras|0 En resultados de barras|0+En superficies|1 En resultados de superficie|0+En sólidos|1 Rellenar la malla de EF|0+Calidad de malla'),
  },
  {
    t: 'Secciones', i: 'section', c: 2, open: true,
    kids: leaf('section', '1 Descripciones|1 Trazar en primer plano|0 Diagramas de resultados rellenos|1 Rayado|0 Todos los valores'),
  },
  { t: 'Regiones medias', i: 'pyramid', c: 1, open: false },
  { t: '', i: '', c: 0 },
];

const Branch = ({ items, rails }: { items: TreeItem[]; rails: boolean[] }) => (
  <ul>
    {items.map((it, n) => {
      const last = n === items.length - 1;
      return (
        <li key={n}>
          {!it.hidden && (
            <Row>
              {rails.map((r, k) => <Guide key={k} $kind={r ? 'pass' : 'none'} />)}
              <Guide $kind={last ? 'end' : 'tee'}>
                {it.open !== undefined && <Expander $open={it.open} aria-label={it.t} />}
              </Guide>
              <label>
                <Check type="checkbox" defaultChecked={it.c === 1} $mixed={it.c === 2} />
                <Icon name={it.i} />
                {it.bold ? <b>{it.t}</b> : it.t}
              </label>
            </Row>
          )}
          {it.kids && <Branch items={it.kids} rails={[...rails, !last]} />}
        </li>
      );
    })}
  </ul>
);

const ScrollTrack = styled.div<{ $row?: boolean }>`
  display: flex;
  flex-direction: ${p => (p.$row ? 'row' : 'column')};
  background: #f0f0f0;
`;
const ScrollArrow = styled.button`
  display: grid;
  place-items: center;
  flex: 0 0 17px;
`;
const Lane = styled.div<{ $grow: number; $thumb?: boolean }>`
  flex: ${p => p.$grow} 1 0;
  background: ${p => (p.$thumb ? '#cdcdcd' : 'transparent')};
`;

/* ---------- graphic view ---------- */

const Viewport = styled.section`
  flex: 1;
  min-height: 0;
  overflow: hidden;
  border-top: 2px solid #696c70;
  border-left: 1px solid #85898f;
  border-right: 2px solid #e6e6e6;
  border-bottom: 2px solid #e6e6e6;
  background: #fff;
`;
const Arrows = styled.g`
  fill: #000;
  stroke: #000;
  stroke-linecap: round;
  filter: drop-shadow(1px 2px 1px rgba(0, 0, 0, 0.35));
`;

const MID = 1047;
const EDGE: [number, number][] = [
  [1047, 279], [1020, 396], [987, 438], [953, 460], [912, 482], [852, 515], [819, 536], [785, 559], [752, 584], [718, 612], [688, 638], [659, 665], [593.5, 731.5],
];
const wing = (flip: boolean) =>
  [[MID, 277.5], ...EDGE, [593.5, 277.5]].map(([x, y]) => `${flip ? 2 * MID + 0.5 - x : x},${y}`).join(' ');
const SUPPORT_X = [669, 820, 971.5, 1123, 1274, 1425.5];
const SUPPORT_Y = [353, 504.5, 655.5];

const Axes = ({ x, y }: { x: number; y: number }) => (
  <g transform={`translate(${x} ${y})`} fontFamily={SANS} fontSize="7">
    <path d="M0 0H26" stroke="#ff2020" /><path d="M22 -2L29 0L22 2Z" fill="#b00000" />
    <path d="M0 0V26" stroke="#00ff00" /><path d="M-2.500 22H2.500L0 30Z" fill="#00b400" />
    <rect x="-2" y="-2" width="4.500" height="4.500" fill="#1010d0" />
    <text x="34" y="3" fill="#ff3030">X</text>
    <text x="-2" y="38" fill="#40f040">Y</text>
  </g>
);

const ModelView = () => (
  <svg width="1326" height="827" viewBox="433 101 1326 827" fill="none" role="img" aria-label="RF-FORM-FINDING">
    <text x="437" y="118" fontFamily={UI} fontSize="11" fill="#000">RF-FORM-FINDING</text>
    <path d="M593.500 731.500H1501" stroke="#5be85b" />
    <g fill="#2ee02e">
      {SUPPORT_X.map(x => (
        <g key={x}>
          <rect x={x - 5} y="272" width="10" height="10" />
          <rect x={x - 5} y="726" width="10" height="5" fill="#c8f4c8" />
          <rect x={x - 5} y="732" width="10" height="5" />
        </g>
      ))}
      {SUPPORT_Y.map(y => (
        <g key={y}><rect x="588" y={y - 5} width="11" height="10" /><rect x="1496" y={y - 5} width="10" height="10" /></g>
      ))}
    </g>
    <polygon points={wing(false)} fill="#ff4040" />
    <polygon points={wing(true)} fill="#ff4040" />
    <g fill="#c83c10">
      {SUPPORT_X.map(x => <rect key={x} x={x - 5} y="278" width="10" height="5" />)}
      {SUPPORT_Y.map(y => (
        <g key={y}><rect x="594" y={y - 5} width="5" height="10" /><rect x="1496" y={y - 5} width="5" height="10" /></g>
      ))}
    </g>
    <path d="M593.500 731.500V277.500H1501.500V731.500" stroke="#6a8c10" />
    <path d="M593.500 731.500L1047.500 277.500L1501.500 731.500" stroke="#c01818" />
    <path d="M602.500 709V285.500H1027" stroke="#ee2828" strokeDasharray="12 5" />
    <path d="M602.500 709L1027 285.500" stroke="#ee2828" strokeDasharray="14 6" />
    <path d="M1047.500 277.500V731.500" stroke="#333" />
    <g fill="#900000">
      <circle cx="593.500" cy="277.500" r="2.800" /><circle cx="1047.500" cy="277.500" r="2.800" /><circle cx="1501.500" cy="277.500" r="2.800" />
      <circle cx="1047.500" cy="731.500" r="2.800" /><circle cx="1501.500" cy="731.500" r="2.800" />
    </g>
    <Arrows>
      <path d="M947.500 381.500L981 413.500" strokeWidth="7" /><path d="M993 426L986.500 405L971.500 419.500Z" strokeWidth="1" />
      <path d="M1149.500 385.500L1117 412" strokeWidth="7" /><path d="M1102 425L1111.500 404L1124.500 419.500Z" strokeWidth="1" />
    </Arrows>
    <Axes x={593.5} y={731.5} />
    <Axes x={500.5} y={815.5} />
  </svg>
);

/* ---------- results table ---------- */

const ResultsPanel = styled.section`
  display: flex;
  flex-direction: column;
  margin-top: 5px;
  min-width: 0;
`;
const ResultTools = styled.div`
  display: flex;
  align-items: center;
  height: 26px;
  padding-left: 8px;
  background: linear-gradient(#eef2fa, #e2e8f3 50%, #cdd2dd);
`;
const TableFrame = styled.div`
  display: flex;
  align-items: flex-start;
  height: 122px;
  padding-right: 3px;
  border: 1px solid #696c70;
  border-top-width: 2px;
  border-bottom: 0;
  background: #f0f0f0;
  > ${ScrollTrack} { height: 111px; width: 16px; }
`;
const Results = styled.table`
  flex: 1;
  min-width: 0;
  table-layout: fixed;
  border-collapse: collapse;
  font: 11px/13px ${UI};
  th, td { height: 16px; padding: 0; border: 1px solid #a0a0a0; font-weight: 400; overflow: hidden; white-space: nowrap; }
  td { background: #fff; }
  tbody tr:nth-child(-n + 3) td { background-color: #f8faff; }
  tbody tr:nth-child(n) td:last-child { background-color: #f0f0f0; }
  thead tr:first-child { line-height: 12px; }
  thead tr:first-child th { height: 15px; background: #e1e1e1; }
  thead tr:first-child th:nth-child(2) { background: #0078d7; color: #fff; }
`;
const RowHead = styled.th<{ $on?: boolean }>`
  background: ${p => (p.$on ? '#0078d7' : '#e1e1e1')};
  box-shadow: inset -1px -1px #a0a0a0, inset 1px 1px #fff;
`;
const GroupTd = styled.td`
  ${Results} tbody tr &&& { padding-left: 2px; outline: 1px dotted #000; outline-offset: -1px; background-color: #ececec; font: 700 12px/13px ${UI}; }
  div { display: flex; align-items: center; gap: 3px; }
`;
const Collapse = styled.button`
  width: 9px;
  height: 9px;
  border: 1px solid #000;
  background: linear-gradient(#000, #000) 50% 50% / 5px 1px no-repeat #fff;
`;
const NameTd = styled.td`
  ${Results} tbody tr & { padding-left: 27px; background-image: linear-gradient(#c8c8c8, #c8c8c8), linear-gradient(#c8c8c8, #c8c8c8); background-repeat: no-repeat; background-size: 1px 100%, 12px 1px; background-position: 8px 0, 8px 50%; }
`;
const NumTd = styled.td`
  ${Results} & { padding-right: 4px; text-align: right; }
`;
const UnitTd = styled.td`
  ${Results} & { padding-left: 4px; }
`;
const SheetTabs = styled.div`
  display: flex;
  height: 17px;
  border-top: 1px solid #696c70;
  background: #f0f0f0;
  font: 11px/14px ${UI};
`;
const SheetTab = styled.button<{ $on?: boolean }>`
  height: 16px;
  padding: 0 2px;
  border: 1px solid #696c70;
  border-top: 0;
  border-left: 0;
  border-radius: 0 0 4px 4px;
  background: ${p => (p.$on ? '#fff' : '#e6e6e6')};
`;
const Pager = styled.div`
  display: flex;
  margin-left: auto;
`;
const PageButton = styled.button<{ $off?: boolean }>`
  display: grid;
  place-items: center;
  width: 15px;
  height: 16px;
  border: 1px solid #a0a0a0;
  border-left-color: #fff;
  color: ${p => (p.$off ? '#a0a0a0' : '#000')};
`;
const PageIcon = ({ d }: { d: string }) => (
  <svg width="9" height="9" viewBox="0 0 9 9" fill="currentColor" aria-hidden="true"><path d={d} /></svg>
);
const PanelFoot = styled.div`
  height: 19px;
  border-bottom: 1px solid #a0a4ac;
  background: #f0f0f0;
`;

const ROWS = ['Carga total en dirección X', 'Suma de esfuerzos en apoyos en X', 'Carga total en dirección Y', 'Suma de esfuerzos en apoyos en Y'];
const SHEETS = ['Resultados - Resumen', 'Nudos - Deformaciones', 'Líneas - Esfuerzos en apoyos', 'Superficies - Deformaciones locales', 'Superficies - Forma', 'Superficies - Deformaciones globales', 'Superficies - Esfuerzos internos básicos', 'Superficies - Esfuerzos internos principales'];

const ResultsTable = () => (
  <TableFrame>
    <Results>
      <colgroup><col width="46" /><col width="288" /><col width="72" /><col width="48" /><col width="396" /><col /></colgroup>
      <thead>
        <tr><RowHead rowSpan={2} /><th>A</th><th>B</th><th>C</th><th>D</th><th /></tr>
        <tr><th>Descripción</th><th>Valor</th><th>Unidad</th><th>Comentario</th><th /></tr>
      </thead>
      <tbody>
        <tr>
          <RowHead $on />
          <GroupTd colSpan={4}><div><Collapse aria-label="RF-FORM-FINDING" />RF-FORM-FINDING</div></GroupTd>
          <td />
        </tr>
        {ROWS.map(r => <tr key={r}><RowHead /><NameTd>{r}</NameTd><NumTd>0.00</NumTd><UnitTd>kN</UnitTd><td /><td /></tr>)}
      </tbody>
    </Results>
    <ScrollTrack>
      <ScrollArrow aria-label="arriba"><Chevron turn={0} /></ScrollArrow>
      <Lane $grow={17} $thumb /><Lane $grow={60} />
      <ScrollArrow aria-label="abajo"><Chevron turn={180} /></ScrollArrow>
    </ScrollTrack>
  </TableFrame>
);

/* ---------- colour panel ---------- */

const PanelBody = styled.div`
  display: flex;
  flex-direction: column;
  flex: 1;
  min-height: 0;
  padding: 4px 3px 0 5px;
  border: 1px solid #9aa3b3;
  background: #f0f0f0;
  font: 11px/16px "Open Sans", sans-serif;
  p { margin: 0; font-family: ${UI}; white-space: nowrap; }
`;
const Quantity = styled.p`
  ${PanelBody} & { font: 11px/16px "Open Sans", sans-serif; }
  sub { font-size: 10px; line-height: 8px; vertical-align: -3px; }
`;
const LegendBox = styled.div`
  display: flex;
  flex-direction: column;
  height: 215px;
  margin-top: 1px;
  padding: 11px 0 0 41px;
  border: 1px solid #a0a0a0;
  border-right-color: #fff;
  border-bottom-color: #fff;
  background: #faf6ee;
`;
const LegendRow = styled.div<{ $c: string }>`
  display: flex;
  height: 17px;
  &::before { content: ''; width: 27px; height: 17px; border: 1px solid #000; border-bottom: 0; background: ${p => p.$c}; }
  &::after { content: ''; order: 1; width: 6px; height: 1px; background: #000; }
  span { order: 2; width: 29px; height: 17px; margin-top: -9px; line-height: 17px; text-align: right; }
  &:last-child::before { height: 1px; border: 0; background: #000; }
`;
const Extremes = styled.dl`
  display: grid;
  grid-template-columns: 70px 34px;
  height: 35px;
  margin: 10px 0 0;
  border: 1px solid #d6e2f6;
  border-right-color: #a8a8e6;
  border-bottom-color: #a8a8e6;
  background: #f0f4fc;
  line-height: 17px;
  text-align: right;
  white-space: pre;
  dd { margin: 0; }
`;
const DetailButton = styled.button`
  display: grid;
  place-items: center;
  align-self: flex-end;
  width: 25px;
  height: 21px;
  margin-top: 138px;
  border: 1px solid #adadad;
  background: #e1e1e1;
`;
const LEGEND: [string, string][] = [
  ['0.84', '#c00000'], ['0.71', '#ff0000'], ['0.57', '#ffa800'], ['0.44', '#d0d000'], ['0.30', '#ffff00'], ['0.17', '#00ff00'],
  ['0.03', '#00e88c'], ['-0.10', '#00f8f8'], ['-0.24', '#0098ff'], ['-0.37', '#0000ff'], ['-0.51', '#0000a0'], ['-0.65', '#0000a0'],
];

/* ---------- status bar ---------- */

const StatusBar = styled.footer`
  display: flex;
  align-items: center;
  height: 19px;
  padding-left: 4px;
  background: linear-gradient(#d9dce2, #bfc4ce 40%, #a9aeb8 50%, #adb2bc);
  font: 12px/16px ${UI};
  color: #26282c;
  > span { flex: 1; padding-top: 2px; font: 11px/16px ${SANS}; }
`;
const Mode = styled.button<{ $on?: boolean; $w: number }>`
  width: ${p => p.$w}px;
  height: 17px;
  margin-right: 2px;
  border: 1px solid ${p => (p.$on ? '#111' : '#eceef2')};
  border-right-color: #e4e6ea;
  border-bottom-color: #c8ccd2;
`;
const StatusCell = styled.i<{ $w: number }>`
  width: ${p => p.$w}px;
  height: 17px;
  border-left: 1px solid #8f949e;
`;

const MENUS: [string, string, string][] = [
  ['', 'A', 'rchivo'], ['', 'E', 'dición'], ['', 'V', 'er'], ['', 'I', 'nsertar'], ['', 'C', 'álculo'], ['', 'R', 'esultados'], ['', 'H', 'erramientas'],
  ['', 'T', 'abla'], ['', 'O', 'pciones'], ['', 'M', 'ódulos adicionales'], ['Ve', 'n', 'tana'], ['A', 'y', 'uda'],
];

export default function App() {
  return (
    <Window>
      <GlobalStyle />
      <TitleBar>
        <Icon name="app" />
        <h1>RFEM 5.20.01 x64 - [1, RF-FORM-FINDING*]</h1>
        <WindowButtons>
          <WindowButton aria-label="Minimizar"><svg width="10" height="10" stroke="#000"><path d="M0 5.500H10" /></svg></WindowButton>
          <WindowButton aria-label="Restaurar"><svg width="10" height="10" stroke="#000" fill="#fff"><path d="M2.500 2.500V.5H9.500V7.500H7.500M.5 2.500H7.500V9.500H.5Z" /></svg></WindowButton>
          <WindowButton aria-label="Cerrar"><Close color="#000" size={12} /></WindowButton>
        </WindowButtons>
      </TitleBar>
      <MenuBar>
        <Grip />
        <Icon name="model" />
        {MENUS.map(([a, u, b]) => <MenuButton key={a + u + b}>{a}<u>{u}</u>{b}</MenuButton>)}
        <MdiButtons>
          <SmallButton aria-label="Minimizar"><svg width="8" height="10" stroke="#6c6c6c" strokeWidth="2"><path d="M0 8H7" /></svg></SmallButton>
          <SmallButton aria-label="Restaurar"><svg width="10" height="10" stroke="#6c6c6c" fill="none"><path d="M2.500 1.500H9.500V6.500M.5 3.500H7.500V8.500H.5Z" /></svg></SmallButton>
          <SmallButton aria-label="Cerrar"><Close /></SmallButton>
        </MdiButtons>
      </MenuBar>
      <ToolRow>
        <ToolGroup>
          <Grip />
          <Tools spec="new open box boxb save report print preview | undo redo | selpoly selcirc selring selwin selfold | list* table* | newload" />
          <CaseSelect width={216} />
          <Tools spec="prev next eyeload* valload* eyeres* valres* | glasses calcbook calcall" />
        </ToolGroup>
        <ToolGroup>
          <Grip />
          <Tools spec="handgrid snap planexy* planeyz planexz lattice tools | copy rotate mirror explode info gearwin gears" />
        </ToolGroup>
        <ToolGroup><Grip /><Tools spec="scrdown scrup acdown acup" /></ToolGroup>
      </ToolRow>
      <ToolRow>
        <ToolGroup>
          <Grip />
          <Tools spec="nnode^> nline nbeam> npoly> | nsup nlsup nssup | ndim> nxx nguide | nsurf> nopen> ncut> nsolid nsolids> | hinge> nnload mload1 mload2 sload fload>" />
        </ToolGroup>
        <ToolGroup>
          <Grip />
          <Tools spec="hand zoomwin zoomx cube cubes | axx axy axz axmy> viewpt> | clip>" />
        </ToolGroup>
        <ToolGroup>
          <Grip />
          <Tools spec="frame camera | ires rainbow* solres react secres blocks> isec resgrid | legend* wand> palette>" />
        </ToolGroup>
        <ToolGroup><Grip /><Tools spec="disp1> disp2>" /></ToolGroup>
      </ToolRow>

      <Workspace>
        <Column>
          <DockTitle $active>
            <h2>Navegador de proyectos - Mostrar</h2>
            <SmallButton aria-label="Fijar"><Pin /></SmallButton>
            <SmallButton aria-label="Cerrar"><Close /></SmallButton>
          </DockTitle>
          <TreeFrame>
            <TreeView><Branch items={TREE} rails={[]} /></TreeView>
            <ScrollTrack>
              <ScrollArrow aria-label="arriba"><Chevron turn={0} /></ScrollArrow>
              <Lane $grow={181} /><Lane $grow={407} $thumb /><Lane $grow={353} />
              <ScrollArrow aria-label="abajo"><Chevron turn={180} /></ScrollArrow>
            </ScrollTrack>
            <ScrollTrack $row>
              <ScrollArrow aria-label="izquierda"><Chevron turn={-90} /></ScrollArrow>
              <Lane $grow={356} $thumb /><Lane $grow={14} />
              <ScrollArrow aria-label="derecha"><Chevron turn={90} /></ScrollArrow>
            </ScrollTrack>
          </TreeFrame>
          <DockTabs>
            <DockTab><Icon name="tabData" />Datos</DockTab>
            <DockTab $on><Icon name="tabShow" />Mostrar</DockTab>
            <DockTab><Icon name="tabViews" />Vistas</DockTab>
            <DockTab><Icon name="rainbow" />Resultados</DockTab>
          </DockTabs>
        </Column>

        <Column>
          <Viewport><ModelView /></Viewport>
          <ResultsPanel>
            <DockTitle>
              <h2>4.0 Resultados - Resumen</h2>
              <SmallButton aria-label="Fijar"><Pin /></SmallButton>
              <SmallButton aria-label="Cerrar"><Close /></SmallButton>
            </DockTitle>
            <ResultTools>
              <Tools spec="t1 t2 t3 t4* t5 | tl tr | sync1* sync2* | tgrid tedit |" />
              <CaseSelect width={134} />
              <Tools spec="| left right | filter | pinfo | bars~ | excel | calc" />
            </ResultTools>
            <ResultsTable />
            <SheetTabs>
              {SHEETS.map((s, i) => <SheetTab key={s} $on={i === 0}>{s}</SheetTab>)}
              <Pager>
                <PageButton $off aria-label="Primera"><PageIcon d="M1 0H2V9H1ZM8 0V9L3 4.500Z" /></PageButton>
                <PageButton $off aria-label="Anterior"><PageIcon d="M6 0V9L2 4.500Z" /></PageButton>
                <PageButton aria-label="Siguiente"><PageIcon d="M3 0V9L7 4.500Z" /></PageButton>
                <PageButton aria-label="Última"><PageIcon d="M7 0H8V9H7ZM1 0V9L6 4.500Z" /></PageButton>
              </Pager>
            </SheetTabs>
            <PanelFoot />
          </ResultsPanel>
        </Column>

        <Column>
          <DockTitle>
            <h2>Panel</h2>
            <SmallButton aria-label="Fijar"><Pin /></SmallButton>
            <SmallButton aria-label="Cerrar"><Close /></SmallButton>
          </DockTitle>
          <PanelBody>
            <p>Esfuerzos internos básicos</p>
            <Quantity>n<sub>xy</sub> [kN/m]</Quantity>
            <LegendBox>
              {LEGEND.map(([v, c]) => <LegendRow key={v} $c={c}><span>{v}</span></LegendRow>)}
            </LegendBox>
            <Extremes><dt>Máx  :</dt><dd>0.84</dd><dt>Mín  :</dt><dd>-0.65</dd></Extremes>
            <DetailButton aria-label="Detalles"><Icon name="sheetzoom" /></DetailButton>
          </PanelBody>
          <IconTabs>
            <DockTab $on aria-label="Escala de colores"><Icon name="colors" /></DockTab>
            <DockTab aria-label="Factores"><Icon name="scales" /></DockTab>
            <DockTab aria-label="Filtro"><Icon name="scope" /></DockTab>
          </IconTabs>
        </Column>
      </Workspace>

      <StatusBar>
        <span>Define gráficamente un nuevo nudo.</span>
        <Mode $on $w={43}>FORZC</Mode>
        <Mode $w={45}>REJILLA</Mode>
        <Mode $on $w={49}>ORTO</Mode>
        <Mode $w={46}>REFENT</Mode>
        <Mode $on $w={29}>GLN</Mode>
        <Mode $on $w={28}>DXF</Mode>
        <StatusCell $w={190} /><StatusCell $w={88} /><StatusCell $w={74} /><StatusCell $w={74} /><StatusCell $w={73} />
      </StatusBar>
    </Window>
  );
}
